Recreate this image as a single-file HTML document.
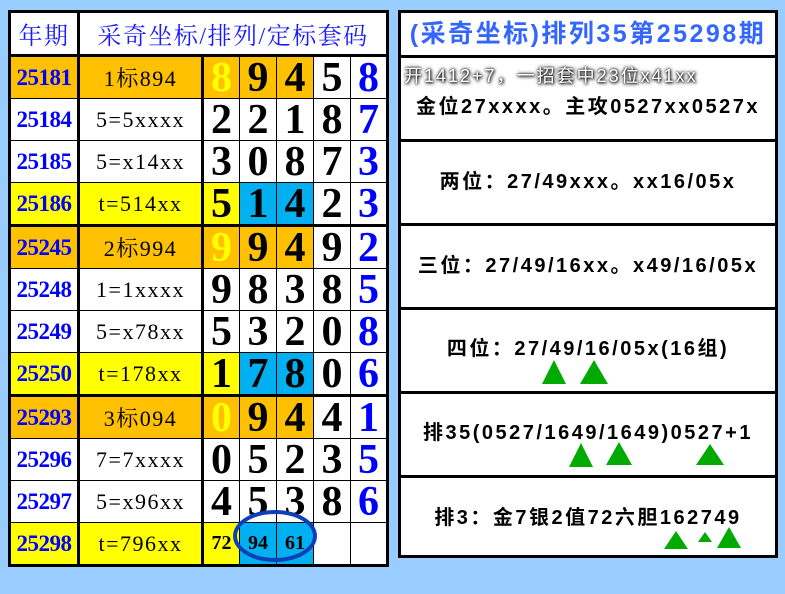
<!DOCTYPE html>
<html><head><meta charset="utf-8"><style>
body{margin:0;width:785px;height:594px;background:#99CCFF;position:relative;overflow:hidden;font-family:"Liberation Serif","Noto Serif CJK SC",serif}
table{position:absolute;left:8px;top:10px;width:381px;border-collapse:collapse;table-layout:fixed;border:3px solid #000;background:#fff}
td{border:1px solid #000;height:41px;padding:0;text-align:center;vertical-align:middle;overflow:hidden;white-space:nowrap}
td.p{color:#0000FF;font-weight:bold;font-size:23px;border-right:3px solid #000;letter-spacing:-0.5px}
td.d{font-size:22px;border-right:3px solid #000;letter-spacing:1.5px}
td.n{font-weight:bold;font-size:42px;line-height:40px}
td.b{color:#0000FF}
tr.h td{font-size:24px;color:#1a1aff;letter-spacing:1.5px;border-bottom:3px solid #000;border-right:3px solid #000}
tr.g td{border-bottom:3px solid #000}
.o{background:#FFC000}.y{background:#FFFF00}.c{background:#00B0F0}.yt{color:#FFFF00}
.R{position:absolute;left:398px;top:10px;width:374px;height:542px;border:3px solid #000;background:#fff}
.bx{position:absolute;left:0;width:374px;border-top:3px solid #000;text-align:center;font-family:"Liberation Sans","Noto Sans CJK SC",sans-serif;font-weight:bold;font-size:20px;letter-spacing:2.5px;color:#000;white-space:nowrap}
.t{position:absolute;width:0;height:0;border-left:12px solid transparent;border-right:12px solid transparent;border-bottom:24px solid #00AA00}
</style></head><body>
<table>
<colgroup><col style="width:69px"><col style="width:124px"><col style="width:37px"><col style="width:37px"><col style="width:37px"><col style="width:37px"><col style="width:37px"></colgroup>
<tr class="h"><td>年期</td><td colspan="6">采奇坐标/排列/定标套码</td></tr>
<tr><td class="p o">25181</td><td class="d o">1标894</td><td class="n o yt">8</td><td class="n o">9</td><td class="n o">4</td><td class="n">5</td><td class="n b">8</td></tr>
<tr><td class="p">25184</td><td class="d">5=5xxxx</td><td class="n">2</td><td class="n">2</td><td class="n">1</td><td class="n">8</td><td class="n b">7</td></tr>
<tr><td class="p">25185</td><td class="d">5=x14xx</td><td class="n">3</td><td class="n">0</td><td class="n">8</td><td class="n">7</td><td class="n b">3</td></tr>
<tr class="g"><td class="p y">25186</td><td class="d y">t=514xx</td><td class="n y">5</td><td class="n c">1</td><td class="n c">4</td><td class="n">2</td><td class="n b">3</td></tr>
<tr><td class="p o">25245</td><td class="d o">2标994</td><td class="n o yt">9</td><td class="n o">9</td><td class="n o">4</td><td class="n">9</td><td class="n b">2</td></tr>
<tr><td class="p">25248</td><td class="d">1=1xxxx</td><td class="n">9</td><td class="n">8</td><td class="n">3</td><td class="n">8</td><td class="n b">5</td></tr>
<tr><td class="p">25249</td><td class="d">5=x78xx</td><td class="n">5</td><td class="n">3</td><td class="n">2</td><td class="n">0</td><td class="n b">8</td></tr>
<tr class="g"><td class="p y">25250</td><td class="d y">t=178xx</td><td class="n y">1</td><td class="n c">7</td><td class="n c">8</td><td class="n">0</td><td class="n b">6</td></tr>
<tr><td class="p o">25293</td><td class="d o">3标094</td><td class="n o yt">0</td><td class="n o">9</td><td class="n o">4</td><td class="n">4</td><td class="n b">1</td></tr>
<tr><td class="p">25296</td><td class="d">7=7xxxx</td><td class="n">0</td><td class="n">5</td><td class="n">2</td><td class="n">3</td><td class="n b">5</td></tr>
<tr><td class="p">25297</td><td class="d">5=x96xx</td><td class="n">4</td><td class="n">5</td><td class="n">3</td><td class="n">8</td><td class="n b">6</td></tr>
<tr><td class="p y">25298</td><td class="d y">t=796xx</td><td class="y" style="font-weight:bold;font-size:20px">72</td><td class="c" style="font-weight:bold;font-size:20px">94</td><td class="c" style="font-weight:bold;font-size:20px">61</td><td></td><td></td></tr>
</table>
<svg style="position:absolute;left:230px;top:508px" width="90" height="56"><ellipse cx="45" cy="28" rx="40" ry="24" fill="none" stroke="#0D3FB8" stroke-width="4"/></svg>
<div class="R">
<div style="position:absolute;left:0;top:0;width:374px;height:42px;line-height:42px;text-align:center;font-family:'Liberation Sans','Noto Sans CJK SC',sans-serif;font-weight:bold;font-size:25px;letter-spacing:2.5px;color:#3366FF;white-space:nowrap">(采奇坐标)排列35第25298期</div>
<div class="bx" style="top:42px;height:82px">
<div style="position:absolute;left:3px;top:4px;font-weight:normal;font-size:18px;letter-spacing:2px;color:#fff;text-shadow:0 0 2px #000,1px 1px 3px #000,0 0 5px #555">开1412+7，一招套中23位x41xx</div>
<div style="position:absolute;left:0;width:374px;top:32px">金位27xxxx。主攻0527xx0527x</div></div>
<div class="bx" style="top:126px;height:81px;line-height:81px">两位：27/49xxx。xx16/05x</div>
<div class="bx" style="top:210px;height:81px;line-height:81px">三位：27/49/16xx。x49/16/05x</div>
<div class="bx" style="top:294px;height:81px;line-height:78px">四位：27/49/16/05x(16组)</div>
<div class="bx" style="top:378px;height:81px;line-height:78px">排35(0527/1649/1649)0527+1</div>
<div class="bx" style="top:462px;height:80px;line-height:80px">排3：金7银2值72六胆162749</div>
</div>
<div class="t" style="left:542px;top:360px"></div>
<div class="t" style="left:580px;top:360px;border-left-width:14px;border-right-width:14px"></div>
<div class="t" style="left:569px;top:443px"></div>
<div class="t" style="left:606px;top:442px;border-bottom-width:23px;border-left-width:13px;border-right-width:13px"></div>
<div class="t" style="left:696px;top:444px;border-bottom-width:21px;border-left-width:14px;border-right-width:14px"></div>
<div class="t" style="left:664px;top:531px;border-bottom-width:18px"></div>
<div class="t" style="left:698px;top:532px;border-bottom-width:10px;border-left-width:7px;border-right-width:7px"></div>
<div class="t" style="left:717px;top:527px;border-bottom-width:21px"></div>
</body></html>
